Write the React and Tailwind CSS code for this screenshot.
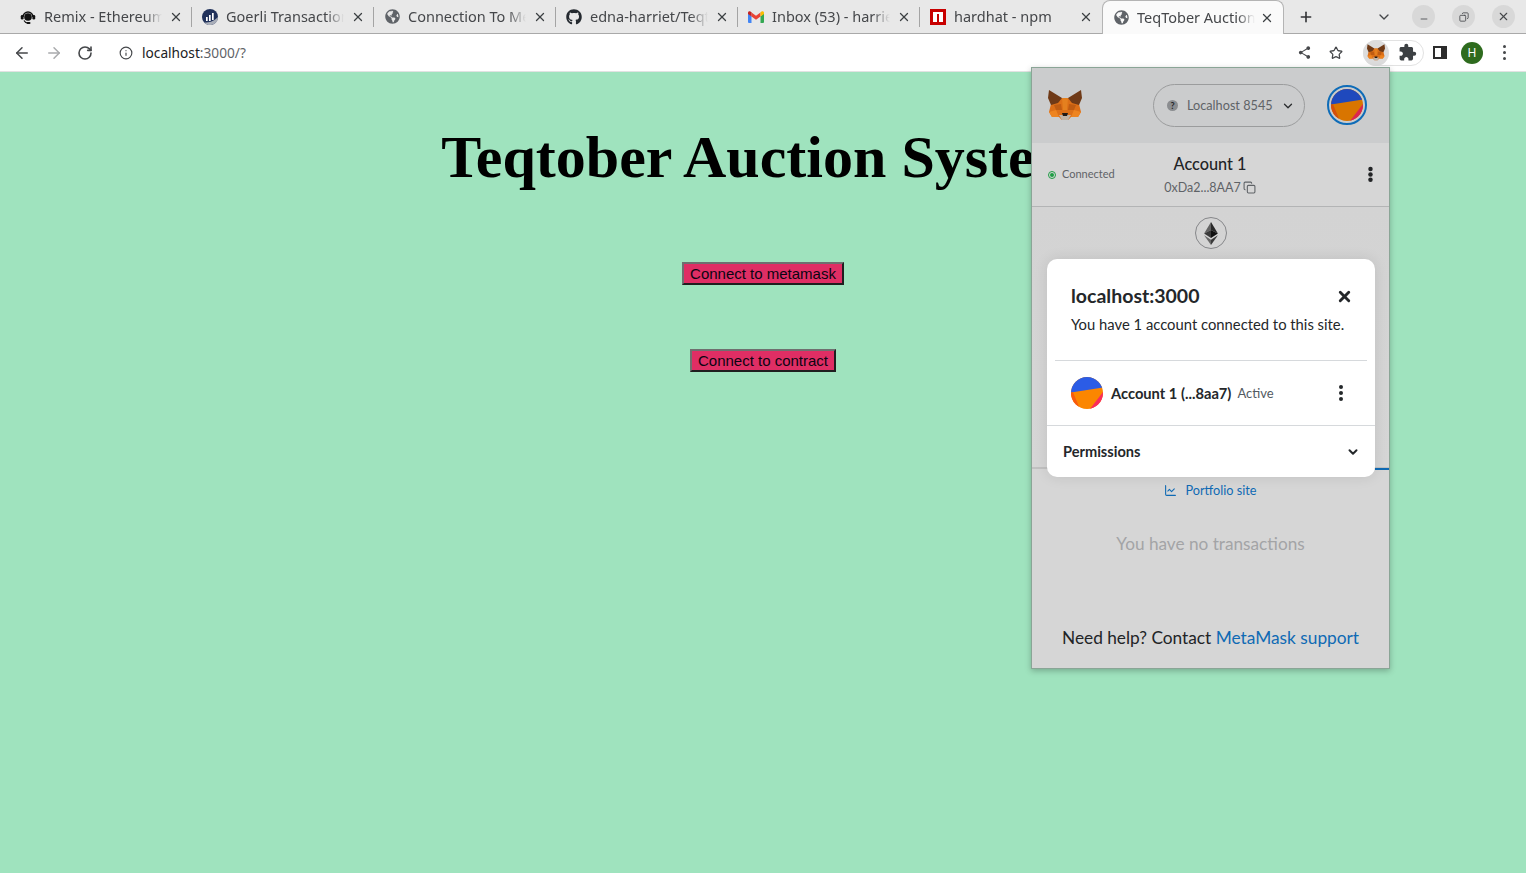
import { FaGithub, FaGlobeAmericas } from "react-icons/fa";
import { MdExtension, MdShare } from "react-icons/md";
import { ArrowLeft, ArrowRight, ChevronDown, Copy, Info, LineChart, Minus, Plus, RotateCw, Star, X } from "lucide-react";

const uiFont = "font-['Noto_Sans',sans-serif]";
const mmFont = "font-['Lato',sans-serif]";

function Fox({ className }) {
  return (
    <svg viewBox="0 0 34 31" className={className}>
      <polygon points="3,14 10,9 14,8 20,8 24,9 31,14 33,22 30,27 23,27 20,30 14,30 11,27 4,27 1,22" fill="#dc6f17" />
      <polygon points="1,0 14,8 10,13 3,15 0,8" fill="#6f3a17" />
      <polygon points="33,0 20,8 24,13 31,15 34,8" fill="#6f3a17" />
      <polygon points="14,8 20,8 19,20 15,20" fill="#e4801f" />
      <polygon points="6,15 13,14 14,20 8,20" fill="#bf5c12" />
      <polygon points="28,15 21,14 20,20 26,20" fill="#bf5c12" />
      <polygon points="1,22 8,20 11,27 4,27" fill="#ee8420" />
      <polygon points="33,22 26,20 23,27 30,27" fill="#ee8420" />
      <polygon points="11,25 23,25 20,30 14,30" fill="#bfb3a6" />
      <polygon points="14,23 20,23 19,26 15,26" fill="#1f1a17" />
    </svg>
  );
}

function Jazzicon({ size, blue, orange, pink, red }) {
  return (
    <svg viewBox="0 0 32 32" width={size} height={size} className="rounded-full shrink-0">
      <rect width="32" height="32" fill={orange} />
      <polygon points="0,0 32,0 32,10.500 0,15.500" fill={blue} />
      <polygon points="0,15.500 2,15.200 9,32 0,32" fill={red} />
      <polygon points="32,15 32,32 19,32" fill={pink} />
    </svg>
  );
}

function RemixIcon() {
  return (
    <svg viewBox="0 0 16 16" className="w-4 h-4 shrink-0">
      <path d="M3 8a5 5 0 0 1 10 0" fill="none" stroke="#111" strokeWidth="1.400" />
      <circle cx="8" cy="8" r="3.800" fill="#111" />
      <rect x="0.800" y="6" width="2.800" height="4.500" rx="1.200" fill="#111" />
      <rect x="12.400" y="6" width="2.800" height="4.500" rx="1.200" fill="#111" />
      <path d="M4 11.500c1 2 2 2.500 4 2.500" fill="none" stroke="#111" strokeWidth="1.200" />
      <rect x="6.500" y="13" width="4" height="2" rx="1" fill="#111" />
    </svg>
  );
}

function EtherscanIcon() {
  return (
    <svg viewBox="0 0 16 16" className="w-4 h-4 shrink-0">
      <circle cx="8" cy="8" r="8" fill="#21325b" />
      <path d="M16 8a8 8 0 0 1-14 5.300c6 1 11-2 14-5.300z" fill="#a9aeb9" />
      <rect x="4" y="8" width="1.700" height="4" fill="#fff" />
      <rect x="7" y="6" width="1.700" height="6" fill="#fff" />
      <rect x="10" y="4" width="1.700" height="7" fill="#fff" />
    </svg>
  );
}

function GmailIcon() {
  return (
    <svg viewBox="0 0 16 12" className="w-4 h-3 shrink-0">
      <path d="M0 2v9a1 1 0 0 0 1 1h2.500V5.500z" fill="#4285f4" />
      <path d="M16 2v9a1 1 0 0 1-1 1h-2.500V5.500z" fill="#34a853" />
      <path d="M3.500 5.500L8 8.800l4.500-3.300V1.500L8 4.800 3.500 1.500z" fill="#ea4335" />
      <path d="M0 2c0-1.700 2-2.500 3.500-.5v4L0 3z" fill="#c5221f" />
      <path d="M16 2c0-1.700-2-2.500-3.500-.5v4L16 3z" fill="#fbbc04" />
    </svg>
  );
}

function NpmIcon() {
  return (
    <div className="w-4 h-4 shrink-0 bg-[#c80000] flex items-center justify-center">
      <div className="w-[10px] h-[10px] bg-white relative">
        <div className="absolute left-[4px] top-[2px] w-[2px] h-[8px] bg-[#c80000]" />
      </div>
    </div>
  );
}

function GlobeIcon() {
  return <FaGlobeAmericas className="w-[15px] h-[15px] shrink-0 text-[#5f6368]" />;
}

const tabs = [
  { icon: <RemixIcon />, title: "Remix - Ethereum IDE" },
  { icon: <EtherscanIcon />, title: "Goerli Transaction Hash" },
  { icon: <GlobeIcon />, title: "Connection To MetaMask" },
  { icon: <FaGithub className="w-4 h-4 shrink-0 text-[#24292f]" />, title: "edna-harriet/Teqtober" },
  { icon: <GmailIcon />, title: "Inbox (53) - harriet" },
  { icon: <NpmIcon />, title: "hardhat - npm" },
];

function Tab({ icon, title, active, last }) {
  return (
    <div
      className={`w-[182px] h-[34px] shrink-0 flex items-center pl-[10px] pr-[9px] relative ${
        active ? "bg-[#fafafa] rounded-t-lg border border-b-0 border-[#b4b4b4] -mb-px z-10" : ""
      }`}
    >
      <div className="w-4 flex justify-center shrink-0">{icon}</div>
      <span className="ml-[8px] w-[118px] overflow-hidden whitespace-nowrap text-[14.500px] text-[#45474a] [mask-image:linear-gradient(to_right,black_85%,transparent)]">
        {title}
      </span>
      <X className="ml-auto w-[14px] h-[14px] text-[#3c4043]" strokeWidth={2.2} />
      {!active && !last && <div className="absolute right-0 top-[7px] h-[20px] w-px bg-[#a4a4a4]" />}
    </div>
  );
}

function TabBar() {
  return (
    <div className={`${uiFont} h-[34px] bg-[#e8e8e8] border-b border-[#a9a9a9] flex items-center pl-[10px] pr-[10px]`}>
      {tabs.map((t, i) => (
        <Tab key={t.title} {...t} last={i === tabs.length - 1} />
      ))}
      <Tab icon={<GlobeIcon />} title="TeqTober Auction System" active />
      <Plus className="ml-[14px] w-[16px] h-[16px] text-[#303134]" strokeWidth={2.4} />
      <ChevronDown className="ml-[62px] w-[16px] h-[16px] text-[#45474a]" strokeWidth={2} />
      <div className="ml-[20px] w-[23px] h-[23px] rounded-full bg-[#d8d8d8] flex items-center justify-center">
        <Minus className="w-[10px] h-[10px] mt-[4px] text-[#45474a]" />
      </div>
      <div className="ml-[17px] w-[23px] h-[23px] rounded-full bg-[#d8d8d8] flex items-center justify-center">
        <Copy className="w-[10px] h-[10px] -scale-x-100 text-[#45474a]" />
      </div>
      <div className="ml-[17px] w-[23px] h-[23px] rounded-full bg-[#d8d8d8] flex items-center justify-center">
        <X className="w-[13px] h-[13px] text-[#45474a]" />
      </div>
    </div>
  );
}

function Toolbar() {
  return (
    <div className={`${uiFont} h-[38px] bg-white flex items-center border-b border-[#e2e2e2] pl-[13px]`}>
      <ArrowLeft className="w-[18px] h-[18px] text-[#45474a]" strokeWidth={2} />
      <ArrowRight className="ml-[14px] w-[18px] h-[18px] text-[#a9abad]" strokeWidth={2} />
      <RotateCw className="ml-[14px] w-[16px] h-[16px] text-[#45474a]" strokeWidth={2.4} />
      <div className="ml-[15px] w-[1245px] h-[30px] rounded-full bg-white flex items-center pl-[11px]">
        <Info className="w-[14px] h-[14px] text-[#45474a]" />
        <span className="ml-[9px] mt-[1px] text-[13.700px] text-[#202124]">
          localhost<span className="text-[#5f6368]">:3000/?</span>
        </span>
        <MdShare className="ml-auto w-[15px] h-[15px] text-[#45474a]" />
        <Star className="ml-[17px] mr-[10px] w-[14px] h-[14px] text-[#45474a]" strokeWidth={2.2} />
      </div>
      <div className="ml-[10px] w-[61px] h-[26px] rounded-full border border-[#e2e2e2] flex items-center">
        <div className="w-[26px] h-[26px] -ml-px rounded-full bg-[#dcdcdc] flex items-center justify-center">
          <Fox className="w-[18px] h-[17px]" />
        </div>
        <MdExtension className="ml-[9px] w-[19px] h-[19px] text-[#3c4043]" />
      </div>
      <div className="ml-[9px] w-[14px] h-[13px] border-2 border-[#2c2c2c] border-r-[6px]" />
      <div className="ml-[14px] w-[22px] h-[22px] rounded-full bg-[#2e6b1e] text-white text-[12px] flex items-center justify-center">
        H
      </div>
      <div className="ml-[20px] flex flex-col gap-[3px]">
        <div className="w-[3px] h-[3px] rounded-full bg-[#45474a]" />
        <div className="w-[3px] h-[3px] rounded-full bg-[#45474a]" />
        <div className="w-[3px] h-[3px] rounded-full bg-[#45474a]" />
      </div>
    </div>
  );
}

function Dots({ className }) {
  return (
    <div className={`flex flex-col gap-[1.500px] ${className}`}>
      <div className="w-[4.500px] h-[4.500px] rounded-full bg-current" />
      <div className="w-[4.500px] h-[4.500px] rounded-full bg-current" />
      <div className="w-[4.500px] h-[4.500px] rounded-full bg-current" />
    </div>
  );
}

function ConnectedCard() {
  return (
    <div className="absolute left-[15px] top-[191px] w-[328px] h-[218px] bg-white rounded-[10px] shadow-[0_0_14px_rgba(0,0,0,0.1)] flex flex-col">
      <div className="pl-[24px] pr-[22px] pt-[26px] h-[101px]">
        <div className="flex items-center justify-between">
          <span className="text-[19.500px] leading-[22px] font-bold text-[#24272a]">localhost:3000</span>
          <X className="w-[17px] h-[17px] text-[#24272a]" strokeWidth={4} />
        </div>
        <p className="mt-[7px] text-[14.800px] leading-[20px] text-[#24272a]">You have 1 account connected to this site.</p>
      </div>
      <div className="mx-[8px] border-t border-[#d6d9dc]" />
      <div className="h-[64px] pl-[24px] pr-[32px] flex items-center">
        <Jazzicon size={32} blue="#2b5ce6" orange="#fb8600" pink="#fa2b5c" red="#f85a0e" />
        <span className="ml-[8px] text-[14.700px] font-bold text-[#24272a]">Account 1 (...8aa7)</span>
        <span className="ml-[6px] mt-[1px] text-[13px] text-[#535a61]">Active</span>
        <Dots className="ml-auto text-[#24272a]" />
      </div>
      <div className="border-t border-[#d6d9dc] flex-1 pl-[16px] pr-[15px] flex items-center justify-between">
        <span className="text-[14.600px] font-bold text-[#24272a]">Permissions</span>
        <ChevronDown className="w-[14px] h-[14px] text-[#24272a]" strokeWidth={3.4} />
      </div>
    </div>
  );
}

function Popup() {
  return (
    <div className={`${mmFont} absolute left-[1031px] top-[67px] w-[359px] h-[602px] border border-[#8aa596] bg-[#d6d6d6] shadow-[0_2px_6px_rgba(0,0,0,0.25)] flex flex-col z-20`}>
      <div className="h-[75px] bg-[#cbcccd] shrink-0 flex items-center pl-[16px] pr-[22px]">
        <Fox className="w-[34px] h-[31px]" />
        <div className="ml-[71px] w-[152px] h-[43px] rounded-full border border-[#9b9c9d] flex items-center pl-[13px] pr-[9px]">
          <div className="w-[11px] h-[11px] rounded-full bg-[#8b8d90] text-[9px] leading-[11px] font-bold text-[#24272a] text-center">?</div>
          <span className="ml-[9px] text-[12.700px] leading-[16px] -mt-[1px] text-[#5f6367]">Localhost 8545</span>
          <ChevronDown className="ml-auto w-[14px] h-[14px] text-[#2a2c2e]" strokeWidth={2.2} />
        </div>
        <div className="ml-auto -mt-[1px] w-[40px] h-[40px] rounded-full border-2 border-[#0e6cb8] flex items-center justify-center">
          <Jazzicon size={32} blue="#1f49bd" orange="#d97500" pink="#dc2650" red="#d44f0c" />
        </div>
      </div>
      <div className="h-[64px] shrink-0 border-b border-[#b3b4b5] flex items-center pl-[16px] pr-[17px]">
        <div className="flex-1 flex items-center">
          <div className="w-[8px] h-[8px] rounded-full border border-[#1f9d45] flex items-center justify-center">
            <div className="w-[4px] h-[4px] rounded-full bg-[#1f9d45]" />
          </div>
          <span className="ml-[6px] text-[11px] text-[#5f6367]">Connected</span>
        </div>
        <div className="flex flex-col items-center -mt-[1px]">
          <span className="text-[16.300px] leading-[20px] font-medium text-[#222426]">Account 1</span>
          <div className="mt-[7px] flex items-center gap-[2px] text-[12.500px] leading-[14px] text-[#5f6367]">
            0xDa2...8AA7
            <Copy className="w-[13px] h-[13px]" />
          </div>
        </div>
        <div className="flex-1 flex justify-end">
          <Dots className="text-[#222426] scale-90" />
        </div>
      </div>
      <div className="h-[262px] shrink-0 border-b-2 border-[#c1c1c1] flex justify-center pt-[10px] bg-gradient-to-b from-[#d3d3d3] to-[#d6d6d6]">
        <div className="w-[32px] h-[32px] rounded-full border border-[#86878a] flex items-center justify-center">
          <svg viewBox="0 0 12 20" className="w-[14px] h-[23px]">
            <polygon points="6,0 0,10 6,7" fill="#626262" />
            <polygon points="6,0 12,10 6,7" fill="#292929" />
            <polygon points="0,10 6,14 6,7" fill="#3a3a3a" />
            <polygon points="12,10 6,14 6,7" fill="#111" />
            <polygon points="0,11.500 6,20 6,15.500" fill="#686868" />
            <polygon points="12,11.500 6,20 6,15.500" fill="#3a3a3a" />
          </svg>
        </div>
      </div>
      <div className="flex-1 flex flex-col items-center">
        <div className="mt-[13px] flex items-center text-[12.700px] leading-[16px] text-[#0f6ab4]">
          <LineChart className="w-[13px] h-[13px]" />
          <span className="ml-[8px]">Portfolio site</span>
        </div>
        <p className="mt-[35px] text-[17.200px] leading-[22px] text-[#a3a4a6]">You have no transactions</p>
        <p className="mt-[72px] text-[17.300px] leading-[22px] text-[#222426]">
          Need help? Contact <span className="text-[#0f6ab4]">MetaMask support</span>
        </p>
      </div>
      <div className="absolute right-0 top-[400px] w-[14px] h-[2px] bg-[#0f6ab4]" />
      <ConnectedCard />
    </div>
  );
}

function ConnectButton({ children, className }) {
  return (
    <button className={`block mx-auto bg-[#df2e64] border-2 border-t-[#6f6f6f] border-l-[#6f6f6f] border-r-[#1f1f1f] border-b-[#1f1f1f] px-[6px] text-[15px] leading-[19px] text-[#0b0512] font-['Liberation_Sans',sans-serif] ${className}`}>
      {children}
    </button>
  );
}

export default function App() {
  return (
    <div className="relative w-[1526px] h-[873px] overflow-hidden bg-[#9fe3be]">
      <TabBar />
      <Toolbar />
      <main className="flex flex-col items-center">
        <h1 className="mt-[51px] text-[60px] leading-[69px] font-bold text-black font-['Liberation_Serif',serif]">Teqtober Auction System</h1>
        <ConnectButton className="mt-[70px]">Connect to metamask</ConnectButton>
        <ConnectButton className="mt-[64px]">Connect to contract</ConnectButton>
      </main>
      <Popup />
    </div>
  );
}
